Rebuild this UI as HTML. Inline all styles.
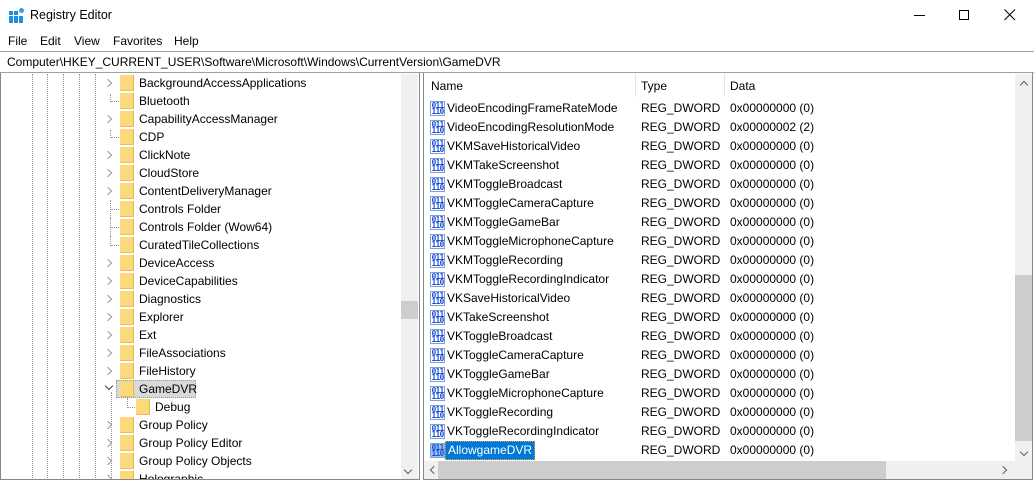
<!DOCTYPE html>
<html><head><meta charset="utf-8"><style>
*{margin:0;padding:0;box-sizing:border-box}
body{width:1034px;height:481px;background:#fff;font-family:"Liberation Sans",sans-serif;font-size:12px;color:#000;position:relative;overflow:hidden}
.a{position:absolute;white-space:nowrap}
.tree .r{position:absolute;left:0;height:18px;line-height:18px;width:400px}
.fold{position:absolute;width:14px;height:16px;background:#fcd97a;border-right:1px solid #e2b84c;border-bottom:1px solid #e8c060}
.arr{position:absolute;width:6px;height:6px;border-right:1.5px solid #999;border-bottom:1.5px solid #999;transform:rotate(-45deg)}
.dl{position:absolute;width:1px;border-left:1px dotted #999}
.dh{position:absolute;height:1px;border-top:1px dotted #999}
.rr{position:absolute;left:424px;height:19px;line-height:19px;width:590px}
.ic{position:absolute;left:6px;top:2px;width:15px;height:15px;border:1px solid #7f9fd8;background:#fff;color:#1b4fd8;font-size:8px;line-height:6px;font-weight:bold;text-align:center;letter-spacing:-0.8px;padding-top:1px;font-family:"DejaVu Sans Mono",monospace}
</style></head><body>
<svg class="a" style="left:9px;top:8px" width="16" height="16"><g fill="#1e8fe0"><rect x="0" y="3" width="4" height="4"/><rect x="5" y="3" width="4" height="4"/><rect x="0" y="8" width="4" height="4"/><rect x="5" y="8" width="4" height="4"/><rect x="10" y="8" width="4" height="4"/><rect x="0" y="12" width="4" height="3"/><rect x="5" y="12" width="4" height="3"/><rect x="10" y="12" width="4" height="3"/></g><circle cx="12.5" cy="2.5" r="2.5" fill="#2aa9e8"/></svg>
<div class="a" style="left:30px;top:8px;font-size:12.5px">Registry Editor</div>
<div class="a" style="left:914px;top:15px;width:11px;height:1px;background:#000"></div>
<div class="a" style="left:959px;top:10px;width:10px;height:10px;border:1px solid #000"></div>
<svg class="a" style="left:1004px;top:9px" width="12" height="12"><path d="M0.5 0.5L11 11M11 0.5L0.5 11" stroke="#000" stroke-width="1"/></svg>
<div class="a" style="left:8px;top:34px">File</div>
<div class="a" style="left:40px;top:34px">Edit</div>
<div class="a" style="left:74px;top:34px">View</div>
<div class="a" style="left:113px;top:34px">Favorites</div>
<div class="a" style="left:174px;top:34px">Help</div>
<div class="a" style="left:0;top:51px;width:1034px;height:22px;border-top:1px solid #a0a0a0;border-bottom:1px solid #a0a0a0;background:#fff"></div>
<div class="a" style="left:7px;top:55px">Computer\HKEY_CURRENT_USER\Software\Microsoft\Windows\CurrentVersion\GameDVR</div>
<div class="a" style="left:0;top:73px;width:420px;height:407px;border:1px solid #828790;border-top:none;overflow:hidden">
<div class="tree" style="position:absolute;left:0;top:1px;width:400px;height:406px;overflow:hidden">
<div class="dl" style="left:31px;top:0;height:406px"></div>
<div class="dl" style="left:46px;top:0;height:406px"></div>
<div class="dl" style="left:62px;top:0;height:406px"></div>
<div class="dl" style="left:78px;top:0;height:406px"></div>
<div class="dl" style="left:94px;top:0;height:406px"></div>
<div class="dl" style="left:110px;top:318px;height:88px"></div>
<div class="dl" style="left:126px;top:324px;height:10px"></div>
</div>
</div>
<div class="tree">
<div class="r" style="top:74px"><div class="arr" style="left:105px;top:6px"></div><div class="fold" style="left:120px;top:1px"></div><span class="a" style="left:139px">BackgroundAccessApplications</span></div>
<div class="r" style="top:92px"><div class="dh" style="left:111px;top:9px;width:8px"></div><div class="dl" style="left:110px;top:2px;height:8px"></div><div class="fold" style="left:120px;top:1px"></div><span class="a" style="left:139px">Bluetooth</span></div>
<div class="r" style="top:110px"><div class="arr" style="left:105px;top:6px"></div><div class="fold" style="left:120px;top:1px"></div><span class="a" style="left:139px">CapabilityAccessManager</span></div>
<div class="r" style="top:128px"><div class="dh" style="left:111px;top:9px;width:8px"></div><div class="dl" style="left:110px;top:2px;height:8px"></div><div class="fold" style="left:120px;top:1px"></div><span class="a" style="left:139px">CDP</span></div>
<div class="r" style="top:146px"><div class="arr" style="left:105px;top:6px"></div><div class="fold" style="left:120px;top:1px"></div><span class="a" style="left:139px">ClickNote</span></div>
<div class="r" style="top:164px"><div class="arr" style="left:105px;top:6px"></div><div class="fold" style="left:120px;top:1px"></div><span class="a" style="left:139px">CloudStore</span></div>
<div class="r" style="top:182px"><div class="arr" style="left:105px;top:6px"></div><div class="fold" style="left:120px;top:1px"></div><span class="a" style="left:139px">ContentDeliveryManager</span></div>
<div class="r" style="top:200px"><div class="dh" style="left:111px;top:9px;width:8px"></div><div class="dl" style="left:110px;top:0;height:18px"></div><div class="fold" style="left:120px;top:1px"></div><span class="a" style="left:139px">Controls Folder</span></div>
<div class="r" style="top:218px"><div class="dh" style="left:111px;top:9px;width:8px"></div><div class="dl" style="left:110px;top:0;height:18px"></div><div class="fold" style="left:120px;top:1px"></div><span class="a" style="left:139px">Controls Folder (Wow64)</span></div>
<div class="r" style="top:236px"><div class="dh" style="left:111px;top:9px;width:8px"></div><div class="dl" style="left:110px;top:0;height:10px"></div><div class="fold" style="left:120px;top:1px"></div><span class="a" style="left:139px">CuratedTileCollections</span></div>
<div class="r" style="top:254px"><div class="arr" style="left:105px;top:6px"></div><div class="fold" style="left:120px;top:1px"></div><span class="a" style="left:139px">DeviceAccess</span></div>
<div class="r" style="top:272px"><div class="arr" style="left:105px;top:6px"></div><div class="fold" style="left:120px;top:1px"></div><span class="a" style="left:139px">DeviceCapabilities</span></div>
<div class="r" style="top:290px"><div class="arr" style="left:105px;top:6px"></div><div class="fold" style="left:120px;top:1px"></div><span class="a" style="left:139px">Diagnostics</span></div>
<div class="r" style="top:308px"><div class="arr" style="left:105px;top:6px"></div><div class="fold" style="left:120px;top:1px"></div><span class="a" style="left:139px">Explorer</span></div>
<div class="r" style="top:326px"><div class="arr" style="left:105px;top:6px"></div><div class="fold" style="left:120px;top:1px"></div><span class="a" style="left:139px">Ext</span></div>
<div class="r" style="top:344px"><div class="arr" style="left:105px;top:6px"></div><div class="fold" style="left:120px;top:1px"></div><span class="a" style="left:139px">FileAssociations</span></div>
<div class="r" style="top:362px"><div class="arr" style="left:105px;top:6px"></div><div class="fold" style="left:120px;top:1px"></div><span class="a" style="left:139px">FileHistory</span></div>
<div class="r" style="top:380px"><div class="a" style="left:116px;top:0;width:80px;height:18px;background:#d9d9d9;border:1px dotted #999"></div><div class="arr" style="left:106px;top:3px;transform:rotate(45deg);border-color:#444"></div><div class="fold" style="left:120px;top:1px"></div><span class="a" style="left:139px">GameDVR</span></div>
<div class="r" style="top:398px"><div class="dh" style="left:127px;top:9px;width:8px"></div><div class="fold" style="left:136px;top:1px"></div><span class="a" style="left:155px">Debug</span></div>
<div class="r" style="top:416px"><div class="arr" style="left:105px;top:6px"></div><div class="fold" style="left:120px;top:1px"></div><span class="a" style="left:139px">Group Policy</span></div>
<div class="r" style="top:434px"><div class="arr" style="left:105px;top:6px"></div><div class="fold" style="left:120px;top:1px"></div><span class="a" style="left:139px">Group Policy Editor</span></div>
<div class="r" style="top:452px"><div class="arr" style="left:105px;top:6px"></div><div class="fold" style="left:120px;top:1px"></div><span class="a" style="left:139px">Group Policy Objects</span></div>
<div class="r" style="top:470px;height:9px;overflow:hidden"><div class="arr" style="left:105px;top:6px"></div><div class="fold" style="left:120px;top:1px"></div><span class="a" style="left:139px">Holographic</span></div>
</div>
<div class="a" style="left:401px;top:74px;width:17px;height:405px;background:#f0f0f0"></div>
<div class="a" style="left:401px;top:301px;width:17px;height:18px;background:#cdcdcd"></div>
<div class="a" style="left:405px;top:467px;width:6px;height:6px;border-right:1.5px solid #606060;border-bottom:1.5px solid #606060;transform:rotate(45deg)"></div>
<div class="a" style="left:423px;top:73px;width:610px;height:407px;border:1px solid #828790;border-top:none"></div>
<div class="a" style="left:431px;top:79px">Name</div>
<div class="a" style="left:635px;top:74px;width:1px;height:23px;background:#e5e5e5"></div>
<div class="a" style="left:641px;top:79px">Type</div>
<div class="a" style="left:724px;top:74px;width:1px;height:23px;background:#e5e5e5"></div>
<div class="a" style="left:730px;top:79px">Data</div>

<div class="rr" style="top:99px"><div class="ic">011<br>110</div><span class="a" style="left:23px">VideoEncodingFrameRateMode</span><span class="a" style="left:217px">REG_DWORD</span><span class="a" style="left:306px">0x00000000 (0)</span></div>
<div class="rr" style="top:118px"><div class="ic">011<br>110</div><span class="a" style="left:23px">VideoEncodingResolutionMode</span><span class="a" style="left:217px">REG_DWORD</span><span class="a" style="left:306px">0x00000002 (2)</span></div>
<div class="rr" style="top:137px"><div class="ic">011<br>110</div><span class="a" style="left:23px">VKMSaveHistoricalVideo</span><span class="a" style="left:217px">REG_DWORD</span><span class="a" style="left:306px">0x00000000 (0)</span></div>
<div class="rr" style="top:156px"><div class="ic">011<br>110</div><span class="a" style="left:23px">VKMTakeScreenshot</span><span class="a" style="left:217px">REG_DWORD</span><span class="a" style="left:306px">0x00000000 (0)</span></div>
<div class="rr" style="top:175px"><div class="ic">011<br>110</div><span class="a" style="left:23px">VKMToggleBroadcast</span><span class="a" style="left:217px">REG_DWORD</span><span class="a" style="left:306px">0x00000000 (0)</span></div>
<div class="rr" style="top:194px"><div class="ic">011<br>110</div><span class="a" style="left:23px">VKMToggleCameraCapture</span><span class="a" style="left:217px">REG_DWORD</span><span class="a" style="left:306px">0x00000000 (0)</span></div>
<div class="rr" style="top:213px"><div class="ic">011<br>110</div><span class="a" style="left:23px">VKMToggleGameBar</span><span class="a" style="left:217px">REG_DWORD</span><span class="a" style="left:306px">0x00000000 (0)</span></div>
<div class="rr" style="top:232px"><div class="ic">011<br>110</div><span class="a" style="left:23px">VKMToggleMicrophoneCapture</span><span class="a" style="left:217px">REG_DWORD</span><span class="a" style="left:306px">0x00000000 (0)</span></div>
<div class="rr" style="top:251px"><div class="ic">011<br>110</div><span class="a" style="left:23px">VKMToggleRecording</span><span class="a" style="left:217px">REG_DWORD</span><span class="a" style="left:306px">0x00000000 (0)</span></div>
<div class="rr" style="top:270px"><div class="ic">011<br>110</div><span class="a" style="left:23px">VKMToggleRecordingIndicator</span><span class="a" style="left:217px">REG_DWORD</span><span class="a" style="left:306px">0x00000000 (0)</span></div>
<div class="rr" style="top:289px"><div class="ic">011<br>110</div><span class="a" style="left:23px">VKSaveHistoricalVideo</span><span class="a" style="left:217px">REG_DWORD</span><span class="a" style="left:306px">0x00000000 (0)</span></div>
<div class="rr" style="top:308px"><div class="ic">011<br>110</div><span class="a" style="left:23px">VKTakeScreenshot</span><span class="a" style="left:217px">REG_DWORD</span><span class="a" style="left:306px">0x00000000 (0)</span></div>
<div class="rr" style="top:327px"><div class="ic">011<br>110</div><span class="a" style="left:23px">VKToggleBroadcast</span><span class="a" style="left:217px">REG_DWORD</span><span class="a" style="left:306px">0x00000000 (0)</span></div>
<div class="rr" style="top:346px"><div class="ic">011<br>110</div><span class="a" style="left:23px">VKToggleCameraCapture</span><span class="a" style="left:217px">REG_DWORD</span><span class="a" style="left:306px">0x00000000 (0)</span></div>
<div class="rr" style="top:365px"><div class="ic">011<br>110</div><span class="a" style="left:23px">VKToggleGameBar</span><span class="a" style="left:217px">REG_DWORD</span><span class="a" style="left:306px">0x00000000 (0)</span></div>
<div class="rr" style="top:384px"><div class="ic">011<br>110</div><span class="a" style="left:23px">VKToggleMicrophoneCapture</span><span class="a" style="left:217px">REG_DWORD</span><span class="a" style="left:306px">0x00000000 (0)</span></div>
<div class="rr" style="top:403px"><div class="ic">011<br>110</div><span class="a" style="left:23px">VKToggleRecording</span><span class="a" style="left:217px">REG_DWORD</span><span class="a" style="left:306px">0x00000000 (0)</span></div>
<div class="rr" style="top:422px"><div class="ic">011<br>110</div><span class="a" style="left:23px">VKToggleRecordingIndicator</span><span class="a" style="left:217px">REG_DWORD</span><span class="a" style="left:306px">0x00000000 (0)</span></div>
<div class="rr" style="top:441px"><div class="ic" style="background:#9cc3ec">011<br>110</div><span class="a" style="left:21px;top:0;height:19px;line-height:17px;padding:0 2px;background:#0078d7;color:#fff;border:1px dotted #f0a030">AllowgameDVR</span><span class="a" style="left:217px">REG_DWORD</span><span class="a" style="left:306px">0x00000000 (0)</span></div>
<div class="a" style="left:1015px;top:74px;width:17px;height:387px;background:#f0f0f0"></div>
<div class="a" style="left:1015px;top:275px;width:17px;height:166px;background:#cdcdcd"></div>
<div class="a" style="left:1021px;top:82px;width:6px;height:6px;border-left:1.5px solid #606060;border-top:1.5px solid #606060;transform:rotate(45deg)"></div>
<div class="a" style="left:1021px;top:449px;width:6px;height:6px;border-right:1.5px solid #606060;border-bottom:1.5px solid #606060;transform:rotate(45deg)"></div>
<div class="a" style="left:424px;top:461px;width:608px;height:18px;background:#f0f0f0"></div>
<div class="a" style="left:438px;top:461px;width:448px;height:18px;background:#cdcdcd"></div>
<div class="a" style="left:431px;top:467px;width:6px;height:6px;border-left:1.5px solid #606060;border-bottom:1.5px solid #606060;transform:rotate(45deg)"></div>
<div class="a" style="left:1000px;top:467px;width:6px;height:6px;border-right:1.5px solid #606060;border-top:1.5px solid #606060;transform:rotate(45deg)"></div>
</body></html>
